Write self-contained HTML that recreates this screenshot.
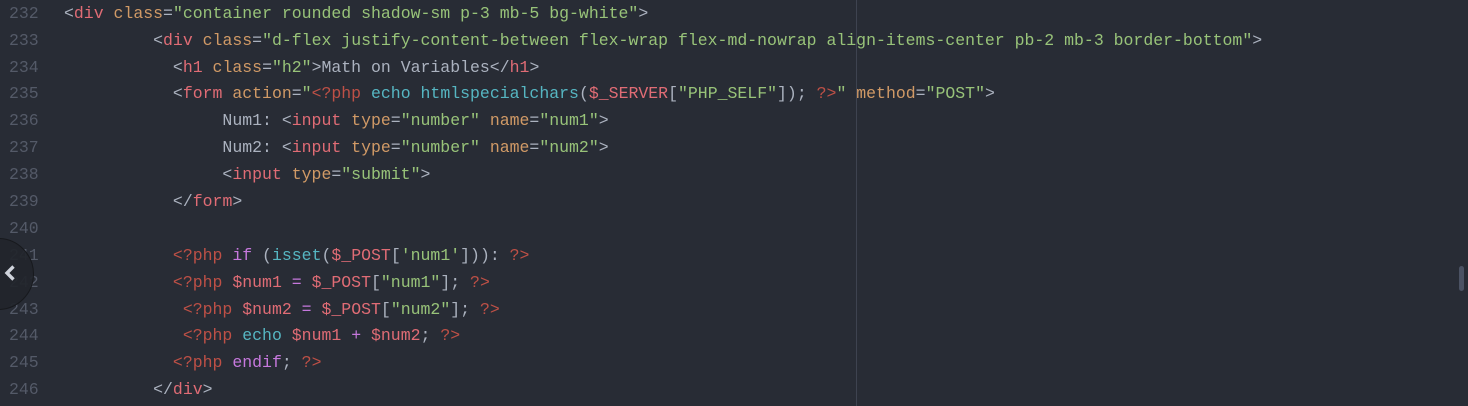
<!DOCTYPE html>
<html><head><style>
body{margin:0;width:1468px;height:406px;background:#282c35;overflow:hidden;position:relative;font-family:"Liberation Mono",monospace;}
.ln{position:absolute;left:0;width:1468px;height:27px;line-height:27px;font-size:16.5px;white-space:pre;color:#abb2bf;}
.n{position:absolute;left:9px;color:#545a68;}
.c{position:absolute;left:64px;}
.t{color:#e06c75}.a{color:#d19a66}.s{color:#98c379}.p{color:#be5046}.k{color:#c678dd}.f{color:#56b6c2}.v{color:#e06c75}.o{color:#c678dd}
</style></head><body>
<div style="position:absolute;left:856px;top:0;width:1px;height:406px;background:#3e4350"></div>
<div style="position:absolute;left:1459px;top:266px;width:5px;height:25px;border-radius:3px;background:#4b5263"></div>
<div class="ln" style="top:0"><span class="n">232</span><span class="c">&lt;<span class="t">div</span> <span class="a">class</span>=<span class="s">"container rounded shadow-sm p-3 mb-5 bg-white"</span>&gt;</span></div>
<div class="ln" style="top:27px"><span class="n">233</span><span class="c">         &lt;<span class="t">div</span> <span class="a">class</span>=<span class="s">"d-flex justify-content-between flex-wrap flex-md-nowrap align-items-center pb-2 mb-3 border-bottom"</span>&gt;</span></div>
<div class="ln" style="top:54px"><span class="n">234</span><span class="c">           &lt;<span class="t">h1</span> <span class="a">class</span>=<span class="s">"h2"</span>&gt;Math on Variables&lt;/<span class="t">h1</span>&gt;</span></div>
<div class="ln" style="top:80px"><span class="n">235</span><span class="c">           &lt;<span class="t">form</span> <span class="a">action</span>=<span class="s">"</span><span class="p">&lt;?php</span> <span class="f">echo</span> <span class="f">htmlspecialchars</span>(<span class="v">$_SERVER</span>[<span class="s">"PHP_SELF"</span>]); <span class="p">?&gt;</span><span class="s">"</span> <span class="a">method</span>=<span class="s">"POST"</span>&gt;</span></div>
<div class="ln" style="top:107px"><span class="n">236</span><span class="c">                Num1: &lt;<span class="t">input</span> <span class="a">type</span>=<span class="s">"number"</span> <span class="a">name</span>=<span class="s">"num1"</span>&gt;</span></div>
<div class="ln" style="top:134px"><span class="n">237</span><span class="c">                Num2: &lt;<span class="t">input</span> <span class="a">type</span>=<span class="s">"number"</span> <span class="a">name</span>=<span class="s">"num2"</span>&gt;</span></div>
<div class="ln" style="top:161px"><span class="n">238</span><span class="c">                &lt;<span class="t">input</span> <span class="a">type</span>=<span class="s">"submit"</span>&gt;</span></div>
<div class="ln" style="top:188px"><span class="n">239</span><span class="c">           &lt;/<span class="t">form</span>&gt;</span></div>
<div class="ln" style="top:215px"><span class="n">240</span></div>
<div class="ln" style="top:242px"><span class="n">241</span><span class="c">           <span class="p">&lt;?php</span> <span class="k">if</span> (<span class="f">isset</span>(<span class="v">$_POST</span>[<span class="s">'num1'</span>])): <span class="p">?&gt;</span></span></div>
<div class="ln" style="top:269px"><span class="n">242</span><span class="c">           <span class="p">&lt;?php</span> <span class="v">$num1</span> <span class="o">=</span> <span class="v">$_POST</span>[<span class="s">"num1"</span>]; <span class="p">?&gt;</span></span></div>
<div class="ln" style="top:296px"><span class="n">243</span><span class="c">            <span class="p">&lt;?php</span> <span class="v">$num2</span> <span class="o">=</span> <span class="v">$_POST</span>[<span class="s">"num2"</span>]; <span class="p">?&gt;</span></span></div>
<div class="ln" style="top:322px"><span class="n">244</span><span class="c">            <span class="p">&lt;?php</span> <span class="f">echo</span> <span class="v">$num1</span> <span class="o">+</span> <span class="v">$num2</span>; <span class="p">?&gt;</span></span></div>
<div class="ln" style="top:349px"><span class="n">245</span><span class="c">           <span class="p">&lt;?php</span> <span class="k">endif</span>; <span class="p">?&gt;</span></span></div>
<div class="ln" style="top:376px"><span class="n">246</span><span class="c">         &lt;/<span class="t">div</span>&gt;</span></div>
<div style="position:absolute;left:-38px;top:238px;width:70px;height:70px;border-radius:50%;background:rgba(34,37,43,0.92);border:1px solid #17191d"></div>
<svg style="position:absolute;left:3px;top:264px" width="14" height="18" viewBox="0 0 14 18"><path d="M10.5 2.5 L4 9 L10.5 15.5" fill="none" stroke="#d0d4dc" stroke-width="3.4"/></svg>
</body></html>
